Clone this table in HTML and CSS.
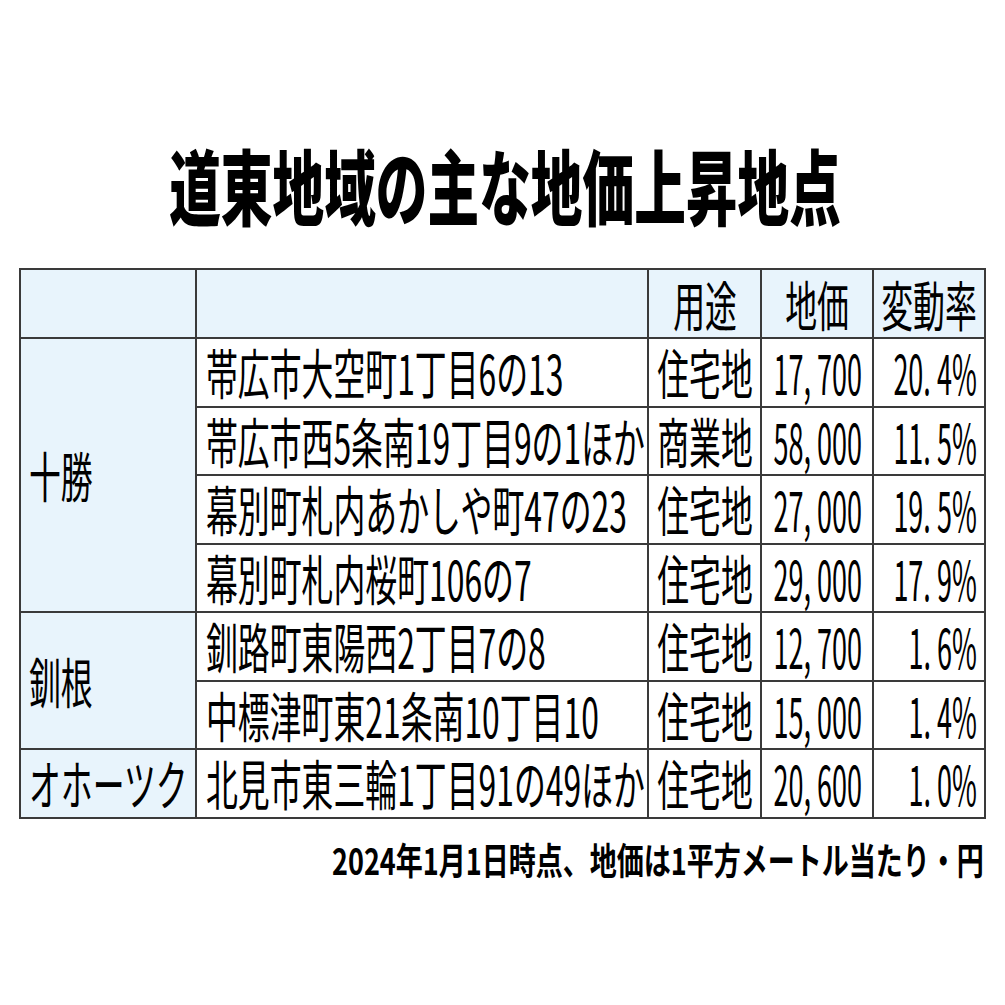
FILE: index.html
```html
<!DOCTYPE html>
<html lang="ja">
<head>
<meta charset="utf-8">
<link rel="stylesheet" href="styles.css">
</head>
<body>
<div class="page">
  <h1 class="title"><span class="sx">道東地域の主な地価上昇地点</span></h1>
  <div class="table">
    <div class="c region hd"></div>
    <div class="c addr hd"></div>
    <div class="c mid hd"><span class="sx">用途</span></div>
    <div class="c mid hd"><span class="sx">地価</span></div>
    <div class="c mid hd"><span class="sx">変動率</span></div>

    <div class="c region r-tokachi"><span class="sx">十勝</span></div>
    <div class="c addr"><span class="sx">帯広市大空町1丁目6の13</span></div>
    <div class="c mid"><span class="sx">住宅地</span></div>
    <div class="c num"><span class="sx">17, 700</span></div>
    <div class="c num pct"><span class="sx">20. 4%</span></div>

    <div class="c addr"><span class="sx">帯広市西5条南19丁目9の1ほか</span></div>
    <div class="c mid"><span class="sx">商業地</span></div>
    <div class="c num"><span class="sx">58, 000</span></div>
    <div class="c num pct"><span class="sx">11. 5%</span></div>

    <div class="c addr"><span class="sx">幕別町札内あかしや町47の23</span></div>
    <div class="c mid"><span class="sx">住宅地</span></div>
    <div class="c num"><span class="sx">27, 000</span></div>
    <div class="c num pct"><span class="sx">19. 5%</span></div>

    <div class="c addr"><span class="sx">幕別町札内桜町106の7</span></div>
    <div class="c mid"><span class="sx">住宅地</span></div>
    <div class="c num"><span class="sx">29, 000</span></div>
    <div class="c num pct"><span class="sx">17. 9%</span></div>

    <div class="c region r-kushiro"><span class="sx">釧根</span></div>
    <div class="c addr"><span class="sx">釧路町東陽西2丁目7の8</span></div>
    <div class="c mid"><span class="sx">住宅地</span></div>
    <div class="c num"><span class="sx">12, 700</span></div>
    <div class="c num pct"><span class="sx">1. 6%</span></div>

    <div class="c addr"><span class="sx">中標津町東21条南10丁目10</span></div>
    <div class="c mid"><span class="sx">住宅地</span></div>
    <div class="c num"><span class="sx">15, 000</span></div>
    <div class="c num pct"><span class="sx">1. 4%</span></div>

    <div class="c region"><span class="sx">オホーツク</span></div>
    <div class="c addr"><span class="sx">北見市東三輪1丁目91の49ほか</span></div>
    <div class="c mid"><span class="sx">住宅地</span></div>
    <div class="c num"><span class="sx">20, 600</span></div>
    <div class="c num pct"><span class="sx">1. 0%</span></div>
  </div>
  <p class="note"><span class="sx">2024年1月1日時点、地価は1平方メートル当たり・円</span></p>
</div>
</body>
</html>
```

FILE: styles.css
```css
html, body {
  margin: 0;
  padding: 0;
  background: #ffffff;
}

body {
  font-family: "Noto Sans CJK JP", "Noto Sans", sans-serif;
  color: #000;
}

.page {
  width: 967px;
  margin-left: 19px;
  padding-top: 143px;
}

.sx {
  display: inline-block;
  white-space: pre;
  flex: none;
}

.title {
  margin: 0;
  height: 82px;
  display: flex;
  justify-content: center;
  font-size: 82px;
  line-height: 82px;
  font-weight: 900;
  padding-left: 4px;
}

.title .sx {
  transform: scaleX(0.63);
  transform-origin: center;
}

.table {
  margin-top: 43px;
  display: grid;
  grid-template-columns: 174px 450px 111px 110px 110px;
  grid-template-rows: 67px repeat(7, 66.5px);
  gap: 2px;
  padding: 2px;
  background: #3a3a3a;
  font-size: 54px;
  line-height: 1;
}

.c {
  background: #ffffff;
  display: flex;
  align-items: center;
  overflow: visible;
}

.c .sx {
  transform: scaleX(0.59);
}

.hd {
  background: #e8f4fc;
}

.region {
  background: #e8f4fc;
  padding-left: 8px;
  justify-content: flex-start;
}

.region .sx,
.addr .sx {
  transform-origin: left center;
}

.r-tokachi {
  grid-row: span 4;
}

.r-kushiro {
  grid-row: span 2;
}

.addr {
  padding-left: 9px;
  justify-content: flex-start;
}

.mid {
  justify-content: center;
}

.mid .sx {
  transform-origin: center;
}

.num {
  justify-content: flex-end;
  padding-right: 10px;
}

.num.pct {
  padding-right: 7px;
}

.c.num .sx {
  transform: scaleX(0.5);
  transform-origin: right center;
}

.note {
  margin: 20px 0 0;
  display: flex;
  justify-content: flex-end;
  font-size: 37px;
  line-height: 40px;
  font-weight: 700;
  padding-right: 2px;
}

.note .sx {
  transform: scaleX(0.73);
  transform-origin: right center;
}
```
